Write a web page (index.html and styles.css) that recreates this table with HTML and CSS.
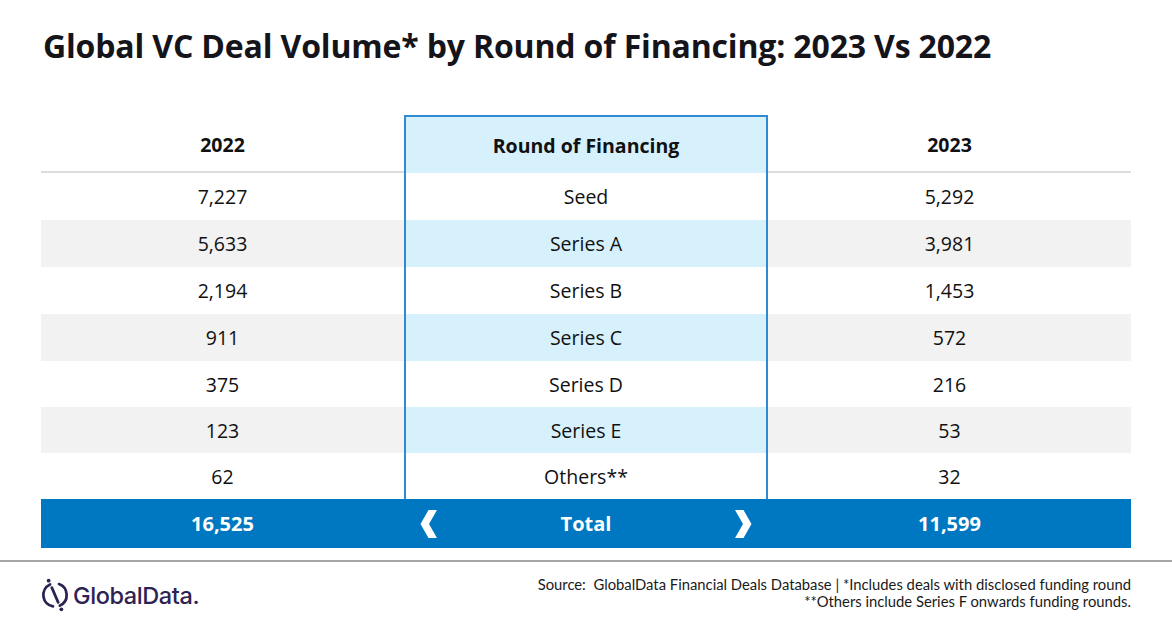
FILE: index.html
```html
<!DOCTYPE html>
<html lang="en">
<head>
<meta charset="utf-8">
<title>Global VC Deal Volume</title>
<link rel="stylesheet" href="styles.css">
</head>
<body>
<div class="page">
  <h1 class="title">Global VC Deal Volume* by Round of Financing: 2023 Vs 2022</h1>

  <div class="table">
    <div class="cell head side">2022</div>
    <div class="cell head mid">Round of Financing</div>
    <div class="cell head side">2023</div>

    <div class="cell">7,227</div>
    <div class="cell mid">Seed</div>
    <div class="cell">5,292</div>

    <div class="cell alt">5,633</div>
    <div class="cell mid alt">Series A</div>
    <div class="cell alt">3,981</div>

    <div class="cell">2,194</div>
    <div class="cell mid">Series B</div>
    <div class="cell">1,453</div>

    <div class="cell alt">911</div>
    <div class="cell mid alt">Series C</div>
    <div class="cell alt">572</div>

    <div class="cell">375</div>
    <div class="cell mid">Series D</div>
    <div class="cell">216</div>

    <div class="cell alt">123</div>
    <div class="cell mid alt">Series E</div>
    <div class="cell alt">53</div>

    <div class="cell">62</div>
    <div class="cell mid">Others**</div>
    <div class="cell">32</div>

    <div class="cell total">16,525</div>
    <div class="cell total total-mid">
      <svg class="chev" viewBox="0 0 18 28" aria-hidden="true"><polygon points="17,0 8.5,0 0.5,14 8.5,28 17,28 9,14"/></svg>
      <span>Total</span>
      <svg class="chev" viewBox="0 0 18 28" aria-hidden="true"><polygon points="1,0 9.5,0 17.5,14 9.5,28 1,28 9,14"/></svg>
    </div>
    <div class="cell total">11,599</div>
  </div>

  <div class="rule"></div>

  <div class="footer">
    <div class="logo">
      <svg class="logo-mark" viewBox="0 0 28 34" aria-hidden="true">
        <path d="M9.35 7.03 A11 11 0 0 0 12.09 27.83" />
        <path d="M17.76 6.66 A11 11 0 0 1 18.65 26.97" />
        <path d="M11 10 L17 24" />
        <circle cx="8" cy="3.5" r="1.8" class="dot"/>
        <circle cx="20" cy="30.5" r="1.8" class="dot"/>
      </svg>
      <span class="logo-text">GlobalData.</span>
    </div>
    <div class="source">
      <div>Source:&nbsp; GlobalData Financial Deals Database | *Includes deals with disclosed funding round</div>
      <div>**Others include Series F onwards funding rounds.</div>
    </div>
  </div>
</div>
</body>
</html>
```

FILE: styles.css
```css
html, body {
  margin: 0;
  padding: 0;
  background: #ffffff;
}

.page {
  width: 1172px;
  height: 628px;
  position: relative;
  overflow: hidden;
  font-family: "Open Sans", "Noto Sans", sans-serif;
  color: #111111;
}

.title {
  margin: 0;
  padding: 25px 0 0 43px;
  height: 88px;
  box-sizing: border-box;
  font-size: 32px;
  line-height: 42px;
  font-weight: 700;
  color: #14141a;
  letter-spacing: -0.16px;
}

.table {
  margin-left: 41px;
  width: 1090px;
  display: grid;
  grid-template-columns: 363px 364px 363px;
  grid-template-rows: 58px 47px 47px 47px 47px 46px 46px 46px 49px;
  margin-top: 27px;
}

.cell {
  display: flex;
  align-items: center;
  justify-content: center;
  font-size: 19.5px;
  color: #111111;
  background: #ffffff;
}

.cell.alt {
  background: #f2f2f2;
}

.cell.mid {
  border-left: 2px solid #2f8ad2;
  border-right: 2px solid #2f8ad2;
}

.cell.mid.alt {
  background: #d6f0fc;
}

.cell.head {
  font-weight: 700;
  font-size: 19.5px;
  box-sizing: border-box;
}

.cell.head.side {
  border-bottom: 2px solid #dcdcdc;
  padding-top: 2px;
}

.cell.head.mid {
  background: #d6f0fc;
  border-top: 2px solid #2f8ad2;
}

.cell.total {
  background: #0077c1;
  color: #ffffff;
  font-weight: 700;
  font-size: 20px;
}

.total-mid {
  justify-content: space-between;
  padding: 0 16px 0 16px;
}

.total-mid span {
  flex: 1;
  text-align: center;
}

.chev {
  width: 18px;
  height: 28px;
  fill: #ffffff;
}

.rule {
  margin-top: 12px;
  height: 2px;
  background: #a6a6a6;
}

.footer {
  display: flex;
  justify-content: space-between;
  align-items: flex-start;
  padding: 0 41px 0 40px;
}

.logo {
  display: flex;
  align-items: center;
  gap: 3px;
  margin-top: 15px;
  color: #2d2353;
}

.logo-mark {
  width: 30px;
  height: 36px;
  fill: none;
  stroke: #2d2353;
  stroke-width: 2.6;
  stroke-linecap: round;
}

.logo-mark .dot {
  fill: #2d2353;
  stroke: none;
}

.logo-text {
  font-family: "Inter", "Noto Sans", sans-serif;
  font-size: 23.5px;
  font-weight: 500;
  letter-spacing: -0.4px;
  color: #2d2353;
}

.source {
  margin-top: 14px;
  text-align: right;
  font-family: "Lato", "Open Sans", sans-serif;
  font-size: 14.8px;
  line-height: 17px;
  color: #1a1a1a;
}
```
